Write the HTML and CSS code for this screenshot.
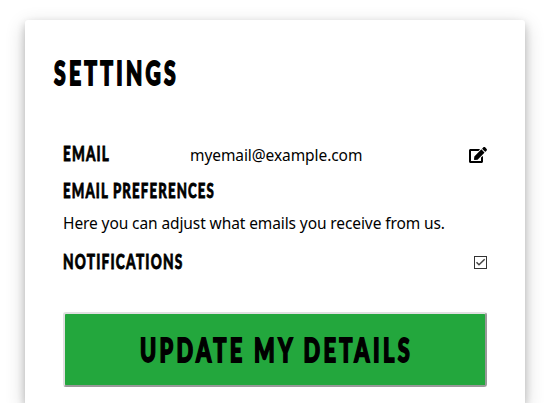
FILE: index.html
```html
<!DOCTYPE html>
<html lang="en">
<head>
<meta charset="utf-8">
<title>Settings</title>
<link rel="stylesheet" href="styles.css">
</head>
<body>
<main class="card">
  <h1 class="title"><svg class="display large" width="130" height="36"><text x="1" y="30" textLength="125" lengthAdjust="spacingAndGlyphs">SETTINGS</text></svg></h1>
  <section class="settings">
    <div class="row email">
      <h2><svg class="display small" width="127" height="24"><text x="0" y="19" textLength="47" lengthAdjust="spacingAndGlyphs">EMAIL</text></svg></h2>
      <span class="address">myemail@example.com</span>
      <svg class="edit" viewBox="0 0 576 512"><path d="M402.600 83.200l90.200 90.200c3.800 3.800 3.800 10 0 13.800L274.400 405.600l-92.800 10.300c-12.400 1.400-22.900-9.100-21.500-21.500l10.300-92.800L388.800 83.200c3.800-3.800 10-3.800 13.800 0zm162-22.900l-48.800-48.800c-15.200-15.200-39.900-15.200-55.200 0l-35.400 35.400c-3.800 3.800-3.800 10 0 13.800l90.200 90.200c3.800 3.800 10 3.800 13.800 0l35.400-35.400c15.200-15.300 15.200-40 0-55.200zM384 346.200V448H64V128h229.800c3.200 0 6.200-1.300 8.500-3.500l40-40c7.600-7.600 2.200-20.500-8.500-20.500H48C21.500 64 0 85.500 0 112v352c0 26.500 21.500 48 48 48h352c26.500 0 48-21.500 48-48V306.200c0-10.700-12.900-16-20.500-8.500l-40 40c-2.200 2.300-3.500 5.300-3.500 8.500z"/></svg>
    </div>
    <h2 class="preferences"><svg class="display small" width="160" height="24"><text x="0" y="19" textLength="152" lengthAdjust="spacingAndGlyphs">EMAIL PREFERENCES</text></svg></h2>
    <p class="hint">Here you can adjust what emails you receive from us.</p>
    <div class="row notifications">
      <h2><svg class="display small" width="130" height="24"><text x="0" y="19" textLength="120.500" lengthAdjust="spacingAndGlyphs">NOTIFICATIONS</text></svg></h2>
      <svg class="check" viewBox="0 0 13 13"><rect x=".5" y=".5" width="12" height="12"/><path d="M2.500 6.300L5 8.800L10.700 3.200"/></svg>
    </div>
    <button class="update"><svg class="display large" width="270" height="36"><text x="0" y="30" textLength="273" lengthAdjust="spacingAndGlyphs">UPDATE MY DETAILS</text></svg></button>
  </section>
</main>
</body>
</html>
```
FILE: styles.css
```css
* { box-sizing: border-box; }
html { background: #fff; overflow: hidden; }
body { margin: 0; color: #000; font: 15.5px/24px "Noto Sans", sans-serif; }
h1, h2, p { margin: 0; }
svg { display: block; overflow: visible; flex: none; }
.card {
  width: 500px;
  height: 383px;
  margin: 20px 0 0 25px;
  padding: 35px 38px 0 28px;
  border-radius: 3px 3px 0 0;
  background: #fff;
  box-shadow: 0 4px 8px rgba(0, 0, 0, .2), 0 6px 20px rgba(0, 0, 0, .19);
}
.title { height: 87px; }
.settings { padding-left: 10px; }
.display { font-family: Lato, sans-serif; font-weight: 900; fill: #000; stroke: #000; }
.large { font-size: 32px; letter-spacing: 5px; stroke-width: 1.8px; }
.small { font-size: 20.5px; letter-spacing: 1.8px; stroke-width: .8px; }
.row { display: flex; align-items: center; height: 24px; }
.address { padding-top: 1px; letter-spacing: -.08px; }
.edit { width: 18px; height: 16px; margin: 1px 0 0 auto; }
.preferences { margin-top: 13px; }
.hint { margin-top: 8px; white-space: nowrap; letter-spacing: -.1px; }
.notifications { margin-top: 15px; }
.check { width: 13px; height: 13px; margin: 1px 0 0 auto; fill: none; stroke: #333; }
.check path { stroke: #444; stroke-width: 1.5px; }
.update {
  display: flex;
  justify-content: center;
  align-items: center;
  width: 424px;
  height: 75px;
  margin: 38px 0 0;
  padding: 0;
  border: 2px solid;
  border-color: #e0e0e0 #999 #999 #e0e0e0;
  border-radius: 3px;
  background: #23a73d;
}
```
